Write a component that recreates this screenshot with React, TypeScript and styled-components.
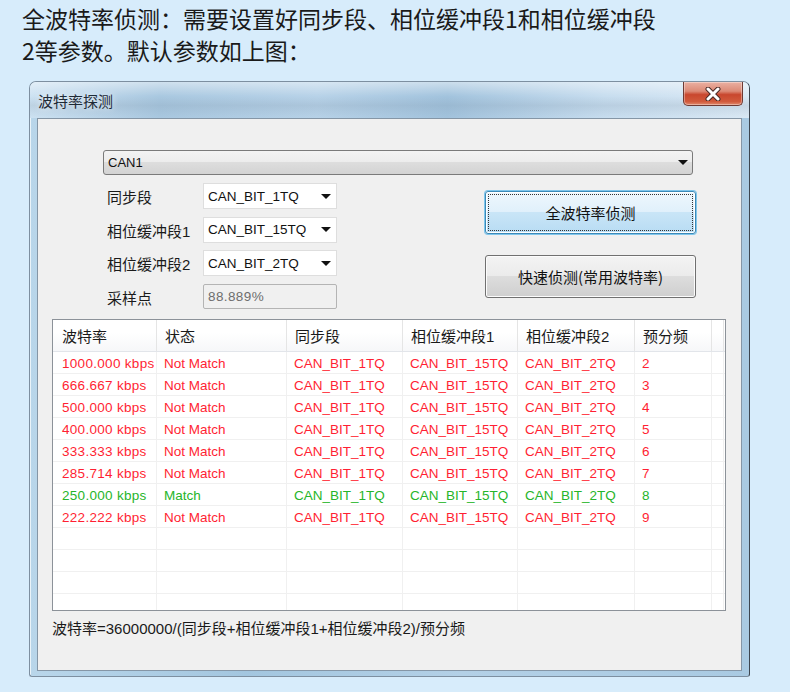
import * as React from "react";
import styled, { createGlobalStyle } from "styled-components";

const GlobalStyle = createGlobalStyle`
	body {
		margin: 0;
		background: #d7ecfb;
		font-family: "Liberation Sans", "Noto Sans CJK SC", sans-serif;
	}
`;

const Page = styled.div`
	width: 790px;
	height: 692px;
	overflow: hidden;
	background: #d7ecfb;
`;

const Heading = styled.p`
	margin: 0;
	padding: 2px 0 0 22px;
	font-family: "Noto Sans CJK SC", sans-serif;
	font-size: 23px;
	line-height: 32px;
	color: #1a1a1a;
`;

const Window = styled.div`
	box-sizing: border-box;
	width: 721px;
	height: 596px;
	margin: 15px 0 0 29px;
	display: flex;
	flex-direction: column;
	border: 1px solid #7d8fa0;
	border-right: 1px solid #3d4650;
	border-radius: 7px 7px 3px 3px;
	background: linear-gradient(
		90deg,
		#b9d6ea 0%,
		#a3c6df 30%,
		#b3d0e6 60%,
		#a9cae2 100%
	);
	box-shadow: inset 1px 1px 0 rgba(255, 255, 255, 0.7);
`;

const TitleBar = styled.div`
	height: 36px;
	display: flex;
	justify-content: space-between;
	align-items: flex-start;
	padding: 0 6px 0 8px;
	border-radius: 6px 6px 0 0;
	background: linear-gradient(
			180deg,
			rgba(255, 255, 255, 0.45),
			rgba(255, 255, 255, 0) 40%,
			rgba(120, 140, 160, 0.18) 65%,
			rgba(255, 255, 255, 0) 100%
		),
		linear-gradient(
			90deg,
			#cde2f2 0%,
			#a9c8e0 18%,
			#b7d2e8 40%,
			#a2c3dd 58%,
			#c7ddef 80%,
			#dae9f5 100%
		);
`;

const Title = styled.span`
	margin-top: 10px;
	font-family: "Noto Sans CJK SC", sans-serif;
	font-size: 15px;
	line-height: 18px;
	color: #1e2a36;
	text-shadow: 0 0 6px rgba(255, 255, 255, 0.9);
`;

const CloseButton = styled.div`
	width: 60px;
	height: 24px;
	box-sizing: border-box;
	display: flex;
	align-items: center;
	justify-content: center;
	border: 1px solid #6e3a34;
	border-top: none;
	border-radius: 0 0 5px 5px;
	background: linear-gradient(
		180deg,
		#eab0a2 0%,
		#dc8a76 40%,
		#c9472e 55%,
		#d15a3c 85%,
		#e08a6e 100%
	);
	box-shadow: inset 0 0 0 1px rgba(255, 255, 255, 0.35);
`;

const Client = styled.div`
	box-sizing: border-box;
	height: 553px;
	margin: 0 7px;
	padding: 31px 0 0 14px;
	border: 1px solid #8596a6;
	background: #f0f0f0;
	display: flex;
	flex-direction: column;
	align-items: flex-start;
`;

const BottomFrame = styled.div`
	flex: 1;
`;

const ArrowDown = styled.span`
	width: 0;
	height: 0;
	border-left: 5px solid transparent;
	border-right: 5px solid transparent;
	border-top: 5px solid #111;
`;

const WideCombo = styled.div`
	box-sizing: border-box;
	width: 590px;
	height: 25px;
	margin-left: 51px;
	padding: 0 4px 0 4px;
	display: flex;
	align-items: center;
	justify-content: space-between;
	border: 1px solid #7a7a7a;
	border-radius: 3px;
	background: linear-gradient(180deg, #f3f3f3 0%, #ececec 49%, #dddddd 50%, #d3d3d3 100%);
	font-size: 13px;
	color: #111;
`;

const Controls = styled.div`
	display: flex;
	margin-top: 8px;
`;

const FormGrid = styled.div`
	display: grid;
	grid-template-columns: 96px 134px;
	grid-auto-rows: 26px;
	row-gap: 7.5px;
	margin-left: 55px;
	align-items: center;
`;

const Label = styled.span`
	font-size: 15px;
	color: #1a1a1a;
	line-height: 26px;
	padding-top: 4px;
`;

const Combo = styled.div`
	box-sizing: border-box;
	height: 26px;
	padding: 0 5px 0 4px;
	display: flex;
	align-items: center;
	justify-content: space-between;
	border: 1px solid #dedede;
	background: #fff;
	font-size: 13.5px;
	color: #111;
`;

const ReadOnlyField = styled.div`
	box-sizing: border-box;
	height: 25px;
	padding: 0 4px;
	display: flex;
	align-items: center;
	border: 1px solid #b4b4b4;
	border-radius: 2px;
	background: #f0f0f0;
	font-size: 13.5px;
	letter-spacing: 0.4px;
	color: #6d6d6d;
`;

const ButtonColumn = styled.div`
	display: flex;
	flex-direction: column;
	gap: 21px;
	margin: 8px 0 0 148px;
`;

const PushButton = styled.div<{ $focused?: boolean }>`
	position: relative;
	box-sizing: border-box;
	width: 211px;
	height: 43px;
	display: flex;
	align-items: center;
	justify-content: center;
	border-radius: 3px;
	border: 1px solid ${(p) => (p.$focused ? "#3c8ab8" : "#707070")};
	background: ${(p) =>
		p.$focused
			? "linear-gradient(180deg, #eef7fd 0%, #e0f0fb 49%, #c9e5f7 50%, #b8dcf3 100%)"
			: "linear-gradient(180deg, #f3f3f3 0%, #ebebeb 49%, #dddddd 50%, #cfcfcf 100%)"};
	box-shadow: ${(p) =>
		p.$focused ? "0 0 0 1px #7fc6ec, inset 0 0 0 1px #ffffff" : "inset 0 0 0 1px #fcfcfc"};
	font-family: "Noto Sans CJK SC", sans-serif;
	font-size: 15px;
	color: #111;

	${(p) =>
		p.$focused &&
		`&::after {
			content: "";
			position: absolute;
			inset: 2px;
			border: 1px dotted #333;
			border-radius: 1px;
		}`}
`;

const Table = styled.div`
	box-sizing: border-box;
	width: 674px;
	height: 292px;
	margin-top: 9px;
	border: 1px solid #8c9299;
	background: #fff;
	overflow: hidden;
`;

const columns = [
	{ title: "波特率", width: 104 },
	{ title: "状态", width: 130 },
	{ title: "同步段", width: 116 },
	{ title: "相位缓冲段1", width: 115 },
	{ title: "相位缓冲段2", width: 117 },
	{ title: "预分频", width: 77 },
	{ title: "", width: 12 },
];

const gridTemplate = columns.map((c) => `${c.width}px`).join(" ");

const HeaderRow = styled.div`
	display: grid;
	grid-template-columns: ${gridTemplate};
	height: 31px;
	border-bottom: 1px solid #e2e5ea;
	background: linear-gradient(180deg, #ffffff 0%, #ffffff 40%, #f6f7f9 100%);
`;

const HeaderCell = styled.div`
	display: flex;
	align-items: center;
	padding-left: 8px;
	border-right: 1px solid #e5e5e5;
	font-size: 15px;
	color: #1a1a1a;

	&:first-child {
		padding-left: 9px;
	}
`;

const Row = styled.div`
	box-sizing: border-box;
	display: grid;
	grid-template-columns: ${gridTemplate};
	height: 22px;
	border-bottom: 1px solid #f0f0f0;
`;

const Cell = styled.div<{ $tone?: "bad" | "good"; $numeric?: boolean }>`
	padding: 2px 0 0 7px;
	border-right: 1px solid #f0f0f0;
	font-size: 13.5px;
	line-height: 19px;
	white-space: nowrap;
	letter-spacing: ${(p) => (p.$numeric ? "0.3px" : "0")};
	color: ${(p) => (p.$tone === "good" ? "#26b52a" : "#ff1f33")};

	&:first-child {
		padding-left: 9px;
	}
`;

const Formula = styled.div`
	margin-top: 8px;
	font-size: 15px;
	line-height: 20px;
	color: #1a1a1a;
`;

const results = [
	{ rate: "1000.000", div: 2 },
	{ rate: "666.667", div: 3 },
	{ rate: "500.000", div: 4 },
	{ rate: "400.000", div: 5 },
	{ rate: "333.333", div: 6 },
	{ rate: "285.714", div: 7 },
	{ rate: "250.000", div: 8, ok: true },
	{ rate: "222.222", div: 9 },
];

function CloseGlyph() {
	return (
		<svg width="20" height="14" viewBox="0 0 20 14">
			<path d="M5 2 L15 12 M15 2 L5 12" stroke="#4a2a26" strokeWidth="5" strokeLinecap="round" />
			<path d="M5 2 L15 12 M15 2 L5 12" stroke="#ffffff" strokeWidth="3" strokeLinecap="round" />
		</svg>
	);
}

export default function App() {
	return (
		<Page>
			<GlobalStyle />
			<Heading>
				全波特率侦测：需要设置好同步段、相位缓冲段1和相位缓冲段
				<br />
				2等参数。默认参数如上图：
			</Heading>

			<Window>
				<TitleBar>
					<Title>波特率探测</Title>
					<CloseButton>
						<CloseGlyph />
					</CloseButton>
				</TitleBar>

				<Client>
					<WideCombo>
						CAN1
						<ArrowDown />
					</WideCombo>

					<Controls>
						<FormGrid>
							<Label>同步段</Label>
							<Combo>
								CAN_BIT_1TQ
								<ArrowDown />
							</Combo>
							<Label>相位缓冲段1</Label>
							<Combo>
								CAN_BIT_15TQ
								<ArrowDown />
							</Combo>
							<Label>相位缓冲段2</Label>
							<Combo>
								CAN_BIT_2TQ
								<ArrowDown />
							</Combo>
							<Label>采样点</Label>
							<ReadOnlyField>88.889%</ReadOnlyField>
						</FormGrid>

						<ButtonColumn>
							<PushButton $focused>全波特率侦测</PushButton>
							<PushButton>快速侦测(常用波特率)</PushButton>
						</ButtonColumn>
					</Controls>

					<Table>
						<HeaderRow>
							{columns.map((c, i) => (
								<HeaderCell key={i}>{c.title}</HeaderCell>
							))}
						</HeaderRow>
						{results.map((r) => {
							const tone = r.ok ? "good" : "bad";
							return (
								<Row key={r.rate}>
									<Cell $tone={tone} $numeric>
										{r.rate} kbps
									</Cell>
									<Cell $tone={tone}>{r.ok ? "Match" : "Not Match"}</Cell>
									<Cell $tone={tone}>CAN_BIT_1TQ</Cell>
									<Cell $tone={tone}>CAN_BIT_15TQ</Cell>
									<Cell $tone={tone}>CAN_BIT_2TQ</Cell>
									<Cell $tone={tone}>{r.div}</Cell>
									<Cell />
								</Row>
							);
						})}
						{[0, 1, 2, 3].map((i) => (
							<Row key={"empty" + i}>
								{columns.map((c, j) => (
									<Cell key={j} />
								))}
							</Row>
						))}
					</Table>

					<Formula>波特率=36000000/(同步段+相位缓冲段1+相位缓冲段2)/预分频</Formula>
				</Client>
				<BottomFrame />
			</Window>
		</Page>
	);
}
